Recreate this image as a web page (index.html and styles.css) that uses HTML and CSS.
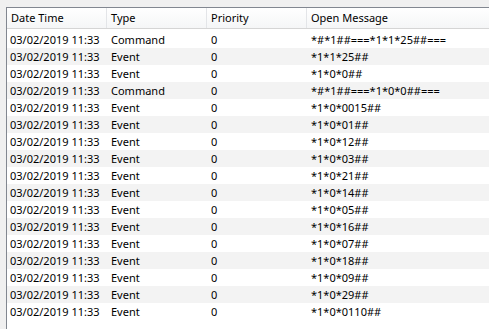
FILE: index.html
```html
<!DOCTYPE html>
<html lang="en">
<head>
  <meta charset="UTF-8" />
  <title>Message Log</title>
  <link rel="stylesheet" href="styles.css">
</head>
<body>
  <div class="log">
    <div class="log-head">
      <div class="col">Date Time</div>
      <div class="col">Type</div>
      <div class="col">Priority</div>
      <div class="col">Open Message</div>
    </div>
    <div class="log-body">
      <div class="row"><div class="cell">03/02/2019 11:33</div><div class="cell">Command</div><div class="cell">0</div><div class="cell">*#*1##===*1*1*25##===</div></div>
      <div class="row"><div class="cell">03/02/2019 11:33</div><div class="cell">Event</div><div class="cell">0</div><div class="cell">*1*1*25##</div></div>
      <div class="row"><div class="cell">03/02/2019 11:33</div><div class="cell">Event</div><div class="cell">0</div><div class="cell">*1*0*0##</div></div>
      <div class="row"><div class="cell">03/02/2019 11:33</div><div class="cell">Command</div><div class="cell">0</div><div class="cell">*#*1##===*1*0*0##===</div></div>
      <div class="row"><div class="cell">03/02/2019 11:33</div><div class="cell">Event</div><div class="cell">0</div><div class="cell">*1*0*0015##</div></div>
      <div class="row"><div class="cell">03/02/2019 11:33</div><div class="cell">Event</div><div class="cell">0</div><div class="cell">*1*0*01##</div></div>
      <div class="row"><div class="cell">03/02/2019 11:33</div><div class="cell">Event</div><div class="cell">0</div><div class="cell">*1*0*12##</div></div>
      <div class="row"><div class="cell">03/02/2019 11:33</div><div class="cell">Event</div><div class="cell">0</div><div class="cell">*1*0*03##</div></div>
      <div class="row"><div class="cell">03/02/2019 11:33</div><div class="cell">Event</div><div class="cell">0</div><div class="cell">*1*0*21##</div></div>
      <div class="row"><div class="cell">03/02/2019 11:33</div><div class="cell">Event</div><div class="cell">0</div><div class="cell">*1*0*14##</div></div>
      <div class="row"><div class="cell">03/02/2019 11:33</div><div class="cell">Event</div><div class="cell">0</div><div class="cell">*1*0*05##</div></div>
      <div class="row"><div class="cell">03/02/2019 11:33</div><div class="cell">Event</div><div class="cell">0</div><div class="cell">*1*0*16##</div></div>
      <div class="row"><div class="cell">03/02/2019 11:33</div><div class="cell">Event</div><div class="cell">0</div><div class="cell">*1*0*07##</div></div>
      <div class="row"><div class="cell">03/02/2019 11:33</div><div class="cell">Event</div><div class="cell">0</div><div class="cell">*1*0*18##</div></div>
      <div class="row"><div class="cell">03/02/2019 11:33</div><div class="cell">Event</div><div class="cell">0</div><div class="cell">*1*0*09##</div></div>
      <div class="row"><div class="cell">03/02/2019 11:33</div><div class="cell">Event</div><div class="cell">0</div><div class="cell">*1*0*29##</div></div>
      <div class="row"><div class="cell">03/02/2019 11:33</div><div class="cell">Event</div><div class="cell">0</div><div class="cell">*1*0*0110##</div></div>
    </div>
  </div>
</body>
</html>
```

FILE: styles.css
```css
body {
  margin: 0;
  padding: 0;
  background: #f0f0f0;
  font-family: 'Noto Sans', 'Open Sans', sans-serif;
  font-size: 11px;
  color: #000;
  overflow: hidden;
}

.log {
  margin: 7px 0 0 6px;
  height: 322px;
  background: #fff;
  border-top: 1px solid #828790;
  border-left: 1px solid #828790;
}

.log-head {
  display: grid;
  grid-template-columns: 100px 100px 100px 1fr;
  height: 20px;
  background: linear-gradient(#ffffff, #f5f6f7);
  border-bottom: 1px solid #d5d5d5;
}

.col {
  padding-left: 4px;
  line-height: 20px;
  border-right: 1px solid #e3e5e8;
  white-space: nowrap;
  overflow: hidden;
}

.col:last-child {
  border-right: none;
}

.log-body {
  padding-top: 2px;
}

.row {
  display: grid;
  grid-template-columns: 100px 100px 100px 1fr;
  height: 17px;
  line-height: 17px;
}

.row:nth-child(even) {
  background: #f3f3f3;
}

.cell {
  padding-left: 4px;
  white-space: nowrap;
  overflow: hidden;
}

.cell:first-child {
  padding-left: 3px;
}
```
